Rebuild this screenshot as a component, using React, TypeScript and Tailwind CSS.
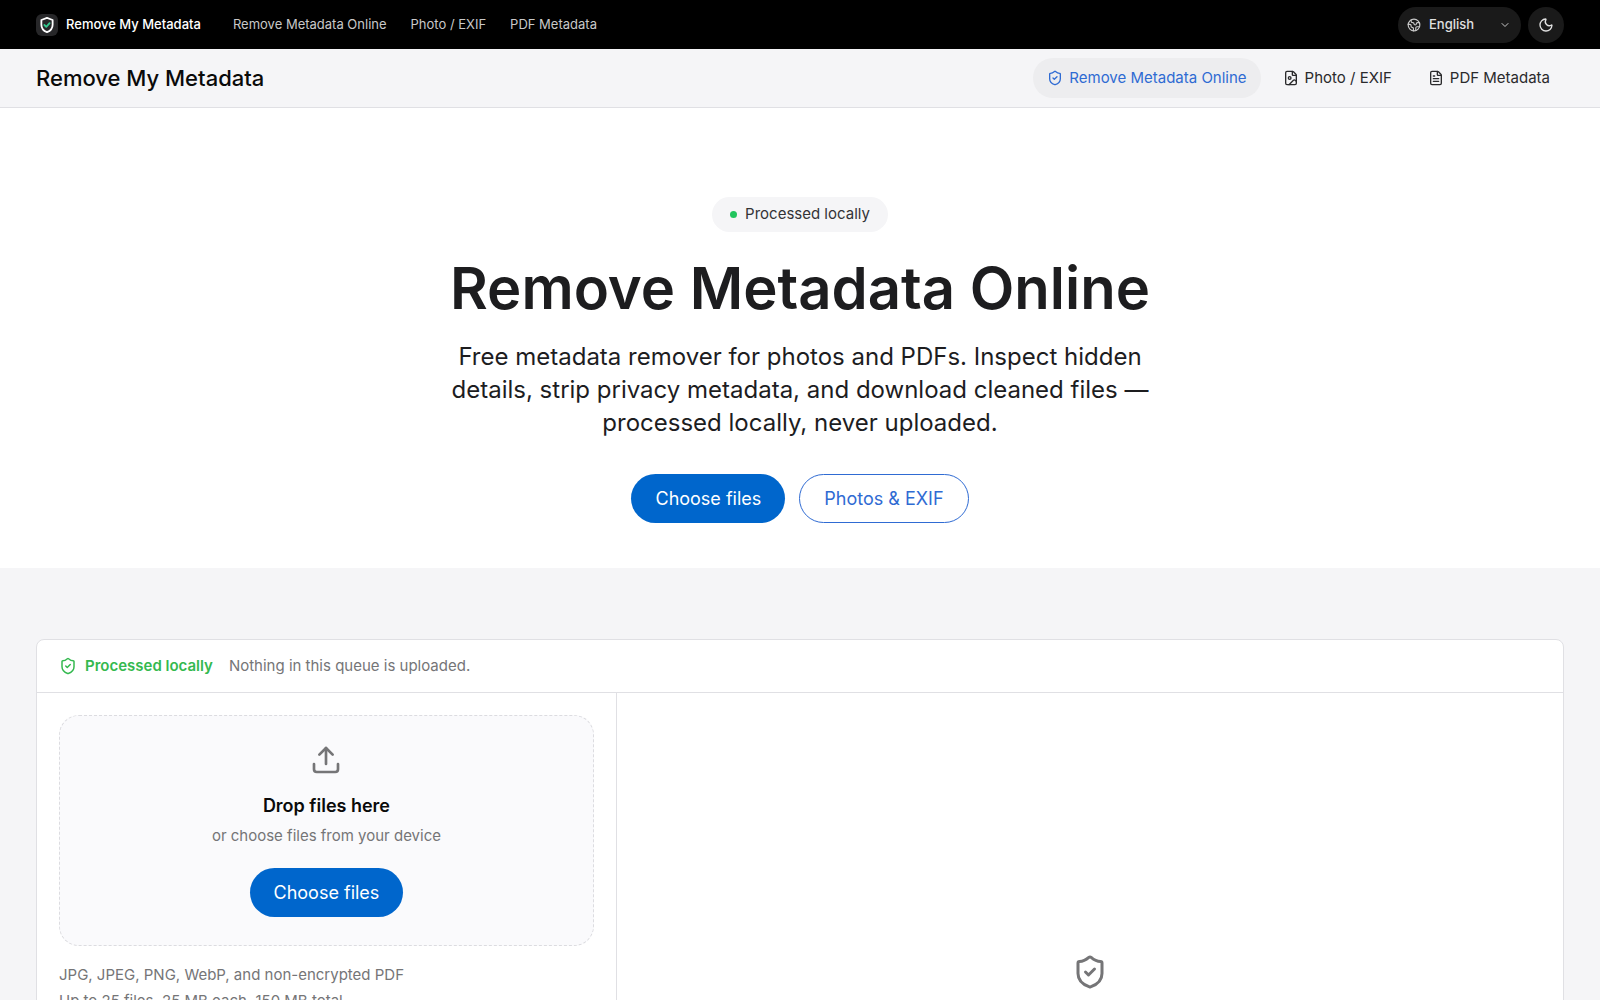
import { useState } from 'react';
import { ChevronDown, Earth, FileImage, FileText, Moon, ShieldCheck, Upload } from 'lucide-react';

const links = [
  { label: 'Remove Metadata Online', icon: ShieldCheck },
  { label: 'Photo / EXIF', icon: FileImage },
  { label: 'PDF Metadata', icon: FileText },
];

const primaryButton = 'h-[49px] rounded-full bg-[#0066cc] px-6 text-lg text-white hover:bg-[#0071e3]';

function TopBar() {
  const [language, setLanguage] = useState('English');

  return (
    <div className="flex h-[49px] items-center bg-black px-9 text-[13px] text-[#c8c8c8]">
      <a href="#" className="flex items-center gap-2 font-medium text-white">
        <span className="flex size-[22px] items-center justify-center rounded-md bg-[#272729]">
          <svg viewBox="0 0 24 24" className="size-[18px]" fill="none" strokeLinecap="round" strokeLinejoin="round">
            <path d="M12 2.5l7.5 2.8v6.2c0 4.8-3 8.2-7.5 10-4.5-1.8-7.5-5.2-7.5-10V5.3z" stroke="#fff" strokeWidth="2.4" />
            <path d="M8.5 12l2.5 2.5 4.5-5" stroke="#34c98e" strokeWidth="2.4" />
          </svg>
        </span>
        Remove My Metadata
      </a>
      <nav className="ml-8 flex gap-6">
        {links.map((l) => (
          <a key={l.label} href="#" className="hover:text-white">{l.label}</a>
        ))}
      </nav>
      <div className="ml-auto flex items-center gap-[7px]">
        <div className="relative flex items-center">
          <Earth className="pointer-events-none absolute left-[9px] size-[14px]" strokeWidth={2} />
          <select
            aria-label="Language"
            value={language}
            onChange={(e) => setLanguage(e.target.value)}
            className="h-9 w-[123px] appearance-none rounded-full bg-[#1a1a1a] pl-[31px] pr-7 text-[13px] font-medium text-[#e0e0e0]"
          >
            <option>English</option>
            <option>Deutsch</option>
            <option>Español</option>
          </select>
          <ChevronDown className="pointer-events-none absolute right-[10px] size-3" />
        </div>
        <button type="button" aria-label="Toggle dark mode" className="flex size-9 items-center justify-center rounded-full bg-[#1a1a1a]">
          <Moon className="size-4 text-[#e0e0e0]" />
        </button>
      </div>
    </div>
  );
}

function SubNav() {
  return (
    <header className="flex h-[59px] items-center justify-between border-b border-[#e0e0e4] bg-[#f5f5f7] px-9">
      <a href="#" className="text-[22px] font-medium text-[#0a0a0a]">Remove My Metadata</a>
      <nav className="flex items-center gap-2 text-[15px]">
        {links.map(({ label, icon: Icon }, i) => (
          <a
            key={label}
            href="#"
            className={i === 0
              ? 'flex h-10 items-center gap-1.5 rounded-full bg-[#ededef] px-3.5 text-[#2f6bd3]'
              : 'flex h-10 items-center gap-1.5 rounded-full px-3.5 text-[#2a2a2c] hover:bg-[#ededef]'}
          >
            <Icon className="size-4" />
            {label}
          </a>
        ))}
      </nav>
    </header>
  );
}

function Hero() {
  return (
    <section className="flex flex-col items-center bg-white px-9 pt-[89px] pb-[45px] text-center">
      <p className="flex h-[35px] items-center gap-2 rounded-full bg-[#f5f5f7] px-[18px] text-[15px] text-[#333336]">
        <span className="size-[7px] rounded-full bg-[#22c55e]" />
        Processed locally
      </p>
      <h1 className="mt-5 text-[58px] leading-[72px] font-semibold text-[#1d1d1f]">Remove Metadata Online</h1>
      <p className="mt-4 max-w-[720px] text-2xl leading-[33px] text-[#1d1d1f]">
        Free metadata remover for photos and PDFs. Inspect hidden details, strip privacy metadata, and download cleaned files — processed locally, never uploaded.
      </p>
      <div className="mt-[35px] flex gap-3.5">
        <button type="button" className={primaryButton}>Choose files</button>
        <a href="#" className="flex h-[49px] items-center rounded-full border border-[#2f6bd3] px-6 text-lg text-[#2f6bd3]">Photos &amp; EXIF</a>
      </div>
    </section>
  );
}

function Workspace() {
  return (
    <section className="bg-[#f5f5f7] px-9 py-[71px]">
      <div className="overflow-hidden rounded-lg border border-[#e0e0e4] bg-white">
        <div className="flex h-[53px] items-center border-b border-[#e0e0e4] px-[22px] text-[15px]">
          <ShieldCheck className="size-[18px] text-[#34b94f]" />
          <strong className="ml-2 font-semibold text-[#34b94f]">Processed locally</strong>
          <span className="ml-4 text-[#757577]">Nothing in this queue is uploaded.</span>
        </div>
        <div className="grid min-h-[600px] grid-cols-[38fr_62fr]">
          <div className="border-r border-[#e0e0e4] p-[22px]">
            <div className="flex flex-col items-center rounded-[20px] border border-dashed border-[#dcdce0] bg-[#fafafc] px-6 py-7">
              <Upload className="size-8 text-[#757577]" />
              <h2 className="mt-4 text-lg leading-7 font-semibold text-[#0a0a0a]">Drop files here</h2>
              <p className="mt-1 text-[15px] leading-6 text-[#757577]">or choose files from your device</p>
              <button type="button" className={`${primaryButton} mt-5`}>Choose files</button>
            </div>
            <div className="mt-4 text-[15px] leading-[26px] text-[#757577]">
              <p>JPG, JPEG, PNG, WebP, and non-encrypted PDF</p>
              <p>Up to 25 files, 25 MB each, 150 MB total</p>
            </div>
          </div>
          <div className="flex flex-col items-center pt-[261px]">
            <ShieldCheck className="size-9 text-[#757577]" />
          </div>
        </div>
      </div>
    </section>
  );
}

export default function App() {
  return (
    <main className="min-h-screen bg-[#f5f5f7] font-['Inter',sans-serif]">
      <TopBar />
      <SubNav />
      <Hero />
      <Workspace />
    </main>
  );
}
